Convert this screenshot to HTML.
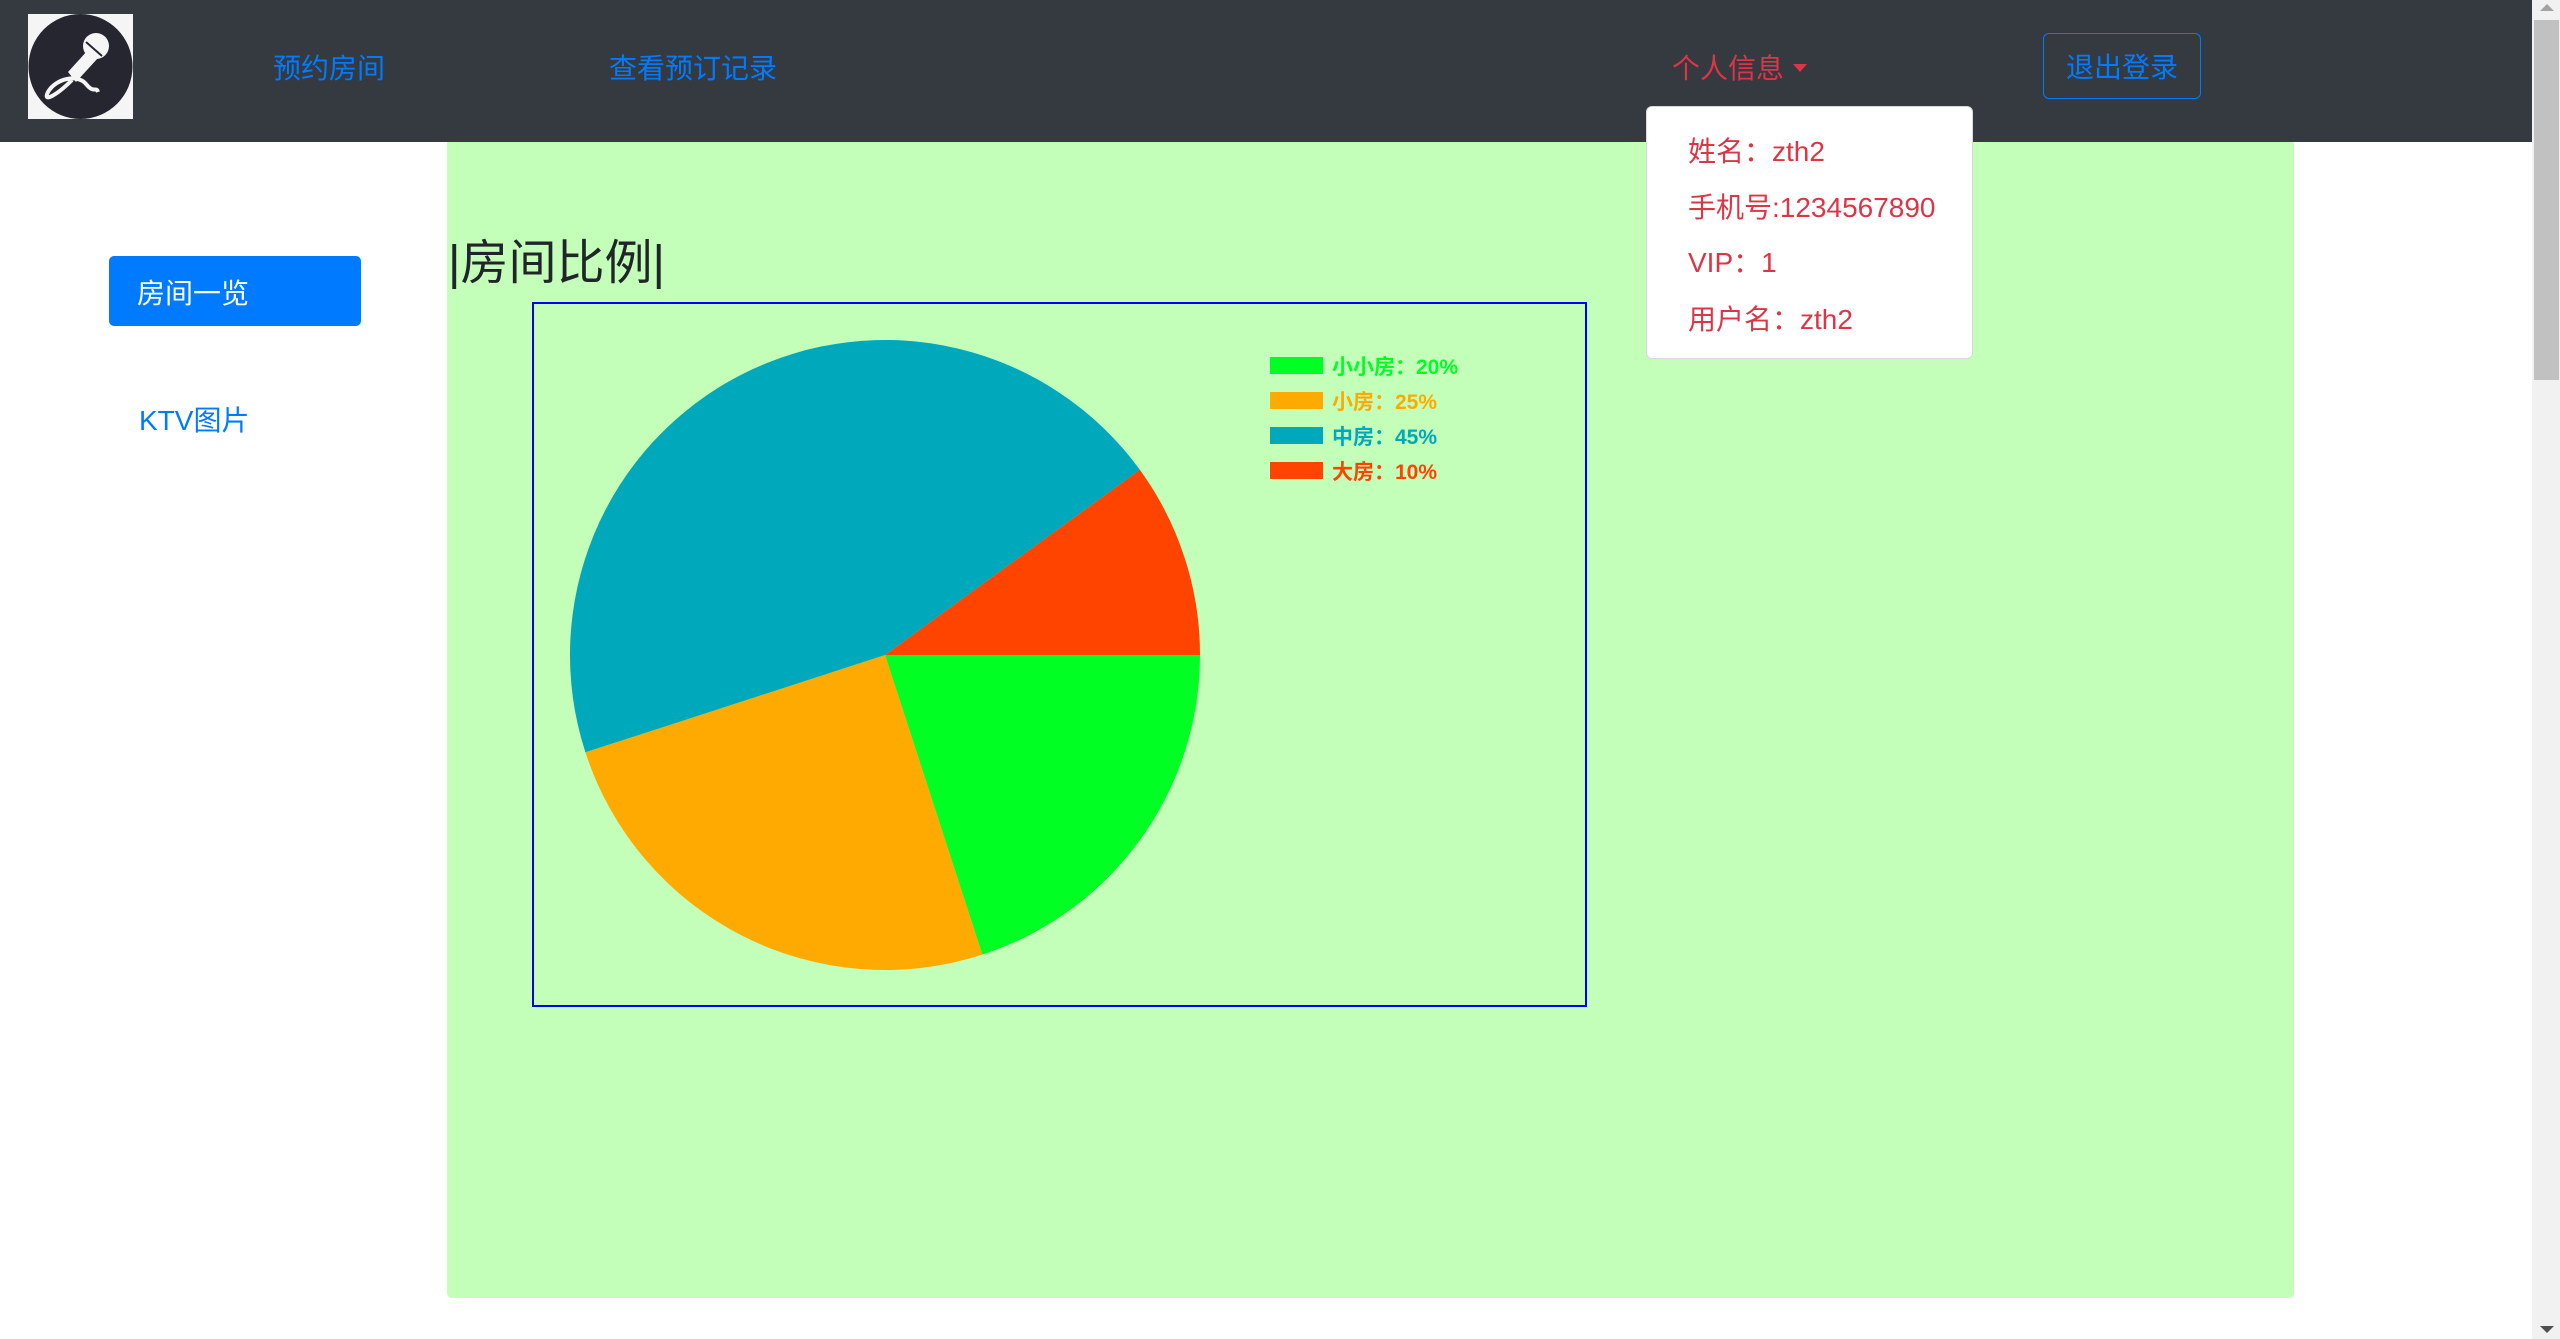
<!DOCTYPE html>
<html><head><meta charset="utf-8"><style>
html,body{margin:0;padding:0;width:2560px;height:1339px;overflow:hidden;background:#fff;font-family:"Liberation Sans","Noto Sans CJK SC",sans-serif;}
.nav{position:absolute;left:0;top:0;width:2532px;height:142px;background:#343a40;}
.a{position:absolute;font-size:28px;line-height:1;white-space:nowrap}
.scroll{position:absolute;left:2532px;top:0;width:28px;height:1339px;background:#f1f1f1}
.thumb{position:absolute;left:2534px;top:20px;width:25px;height:360px;background:#c1c1c1}
</style></head><body>
<div class="nav"></div>
<svg style="position:absolute;left:28px;top:14px" width="105" height="105" viewBox="0 0 105 105">
<rect width="105" height="105" fill="#f5f5f5"/>
<ellipse cx="52.5" cy="52.5" rx="52" ry="52.5" fill="#262630"/>
<path d="M40 58 L60 36 L70 44 L48 68 Z" fill="#f5f5f5"/>
<circle cx="68" cy="32" r="13" fill="#f5f5f5"/>
<path d="M58 28 L74 42" stroke="#262630" stroke-width="2"/>
<path d="M44 66 C30 80 14 90 20 78 C28 64 50 60 58 70 C66 80 68 72 70 78" stroke="#f5f5f5" stroke-width="4" fill="none"/>
</svg>
<div class="a" style="left:273px;top:55px;color:#007bff">预约房间</div>
<div class="a" style="left:609px;top:55px;color:#007bff">查看预订记录</div>
<div class="a" style="left:1672px;top:55px;color:#dc3545">个人信息</div>
<div style="position:absolute;left:1793px;top:64px;width:0;height:0;border-left:7px solid transparent;border-right:7px solid transparent;border-top:8px solid #dc3545"></div>
<div style="position:absolute;left:2043px;top:33px;width:158px;height:66px;border:1.5px solid #007bff;border-radius:6px;box-sizing:border-box"></div>
<div class="a" style="left:2066px;top:54px;color:#007bff">退出登录</div>

<div style="position:absolute;left:447px;top:142px;width:1847px;height:1156px;background:#c3ffb9;border-radius:0 0 5px 5px"></div>

<div style="position:absolute;left:109px;top:256px;width:252px;height:70px;background:#007bff;border-radius:5px"></div>
<div class="a" style="left:137px;top:280px;color:#fff">房间一览</div>
<div class="a" style="left:139px;top:407px;color:#007bff">KTV图片</div>

<div class="a" style="left:448px;top:240px;font-size:48px;color:#212529">|房间比例|</div>

<div style="position:absolute;left:532px;top:302px;width:1055px;height:705px;border:2.5px solid #0000ff;box-sizing:border-box"></div>
<svg style="position:absolute;left:0;top:0" width="2560" height="1339">
<path d="M885 655 L1200 655 A315 315 0 0 1 982.3 954.6 Z" fill="#00ff22"/>
<path d="M885 655 L982.3 954.6 A315 315 0 0 1 585.4 752.3 Z" fill="#ffaa00"/>
<path d="M885 655 L585.4 752.3 A315 315 0 0 1 1139.8 469.8 Z" fill="#00a8bb"/>
<path d="M885 655 L1139.8 469.8 A315 315 0 0 1 1200 655 Z" fill="#ff4400"/>
<rect x="1270" y="357" width="53" height="17" fill="#00ff22"/>
<rect x="1270" y="392" width="53" height="17" fill="#ffaa00"/>
<rect x="1270" y="427" width="53" height="17" fill="#00a8bb"/>
<rect x="1270" y="462" width="53" height="17" fill="#ff4400"/>
<g font-family="Liberation Sans,Noto Sans CJK SC,sans-serif" font-size="21" font-weight="bold">
<text x="1332" y="374" fill="#00ff22">小小房：20%</text>
<text x="1332" y="409" fill="#ffaa00">小房：25%</text>
<text x="1332" y="444" fill="#00a8bb">中房：45%</text>
<text x="1332" y="479" fill="#ff4400">大房：10%</text>
</g>
</svg>

<div style="position:absolute;left:1646px;top:106px;width:327px;height:253px;background:#fff;border:1px solid rgba(0,0,0,.15);border-radius:6px;box-sizing:border-box"></div>
<div class="a" style="left:1688px;top:138px;color:#dc3545">姓名：zth2</div>
<div class="a" style="left:1688px;top:194px;color:#dc3545">手机号:1234567890</div>
<div class="a" style="left:1688px;top:249px;color:#dc3545">VIP：1</div>
<div class="a" style="left:1688px;top:306px;color:#dc3545">用户名：zth2</div>

<div class="scroll"></div>
<div class="thumb"></div>
<div style="position:absolute;left:2540px;top:4px;width:0;height:0;border-left:7px solid transparent;border-right:7px solid transparent;border-bottom:7px solid #a3a3a3"></div>
<div style="position:absolute;left:2540px;top:1326px;width:0;height:0;border-left:7px solid transparent;border-right:7px solid transparent;border-top:7px solid #505050"></div>
</body></html>
